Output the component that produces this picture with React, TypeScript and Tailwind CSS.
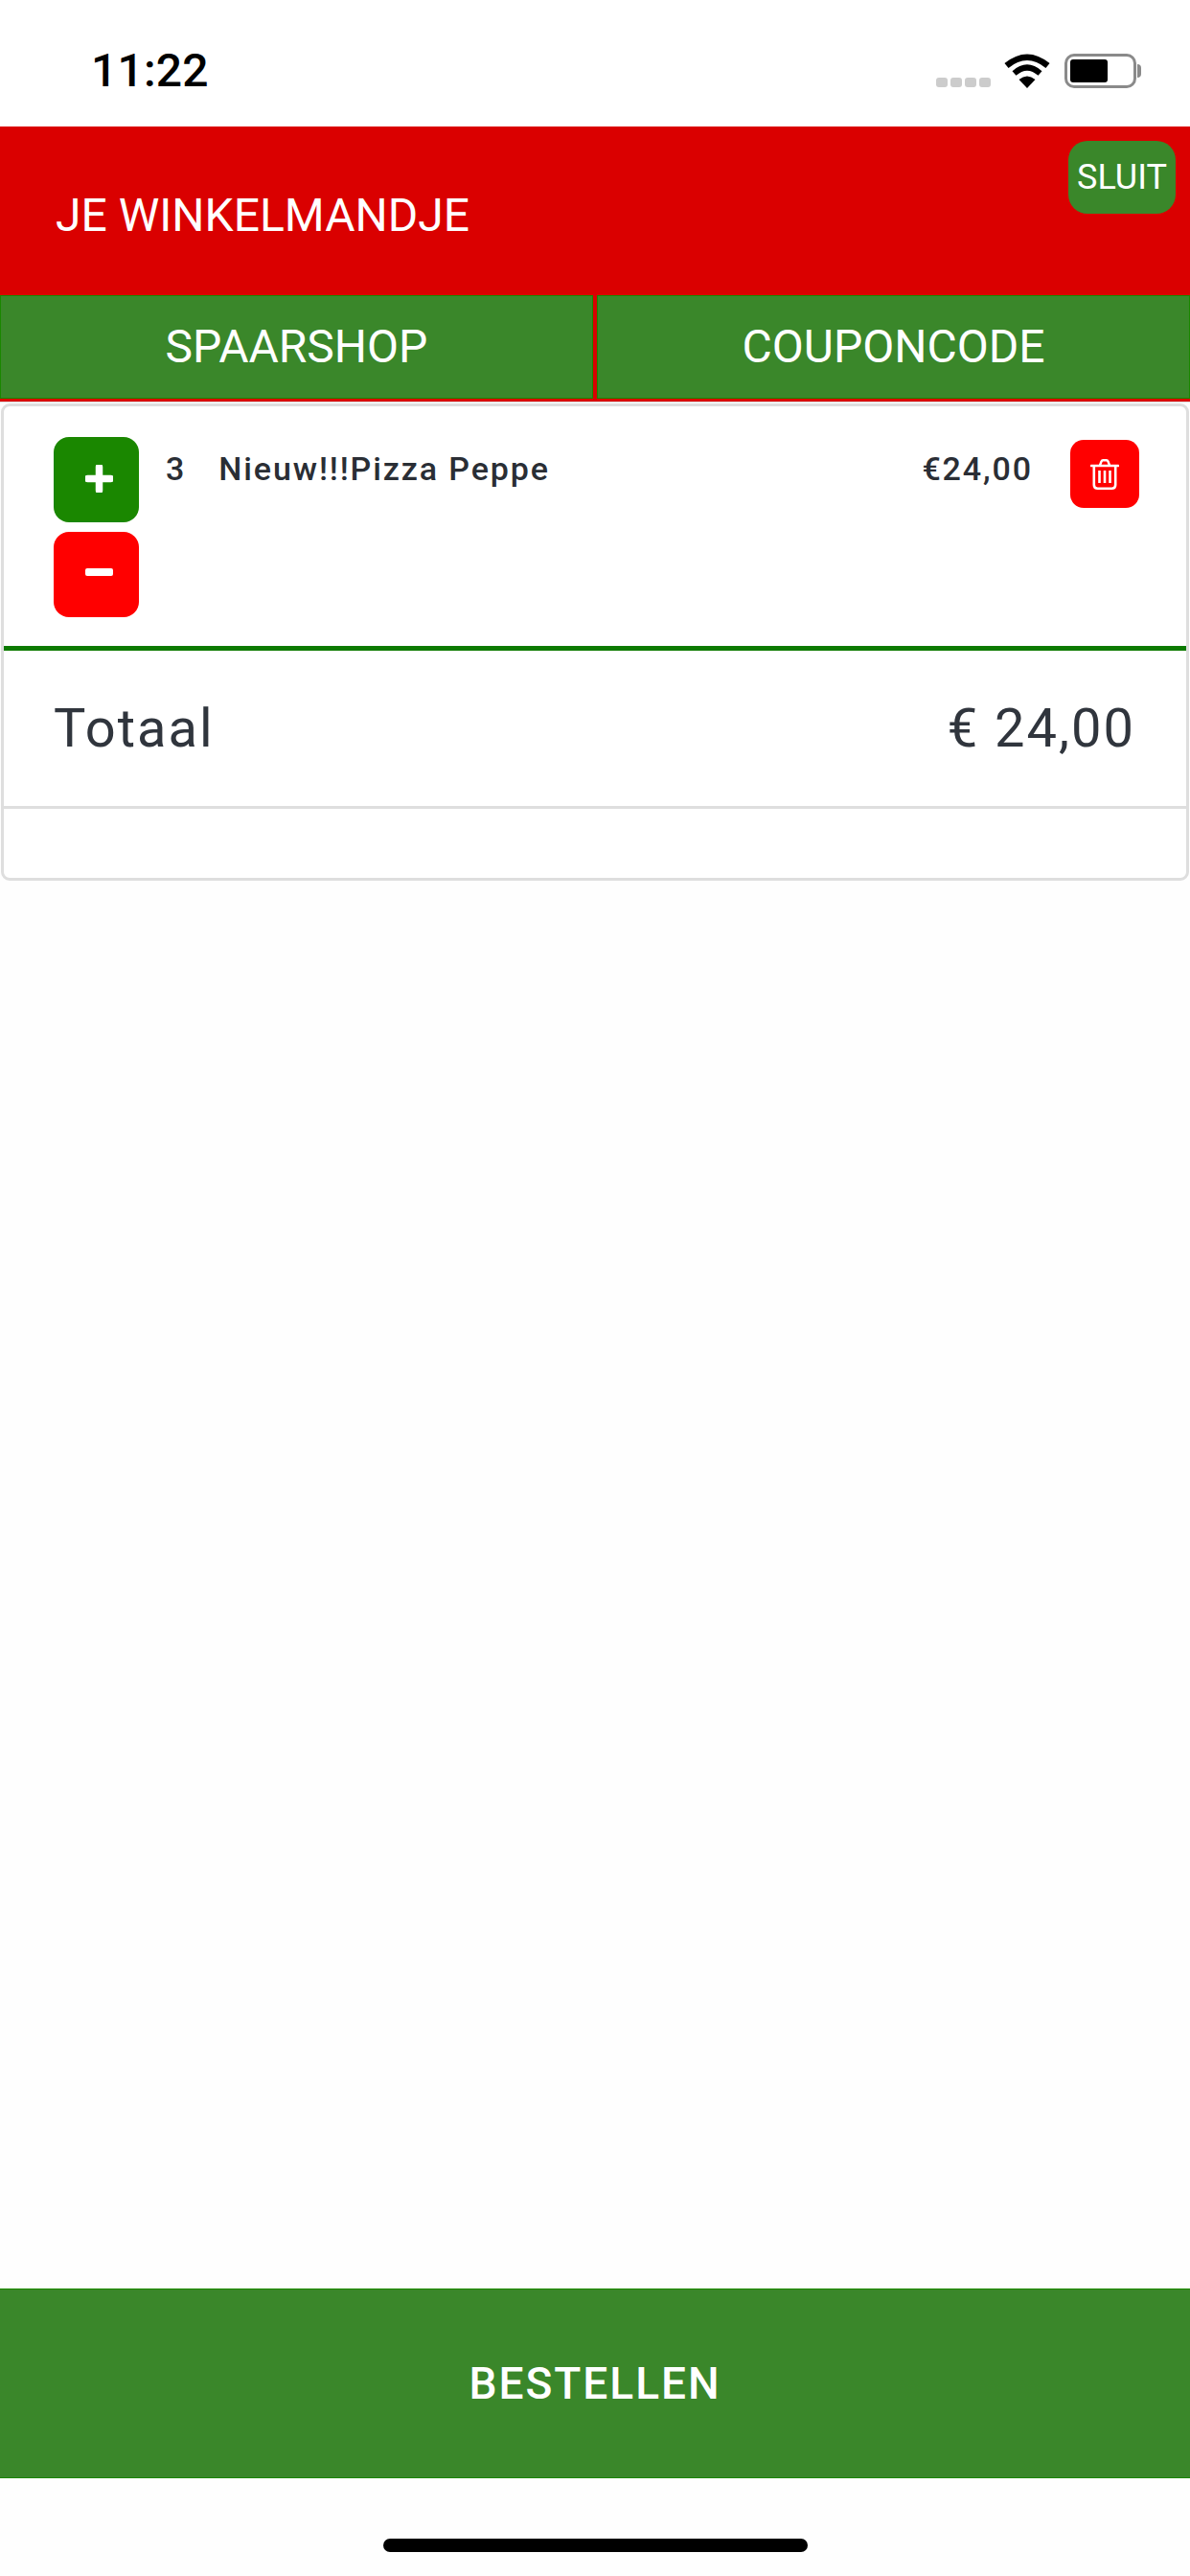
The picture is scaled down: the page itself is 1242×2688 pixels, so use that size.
const font = { fontFamily: "Roboto, 'Liberation Sans', sans-serif" };

function Wifi() {
  return (
    <svg width="48" height="36" viewBox="0 0 48 36" className="block">
      <path d="M2.5 12.5 Q24 -5 45.5 12.5" fill="none" stroke="#000" strokeWidth="6.5" />
      <path d="M10.5 20.5 Q24 8.5 37.5 20.5" fill="none" stroke="#000" strokeWidth="6" />
      <path d="M15.5 27 L24 36 L32.5 27 Q24 20 15.5 27 Z" fill="#000" />
    </svg>
  );
}

function Battery() {
  return (
    <div className="flex items-center">
      <div className="w-[75px] h-[36px] rounded-[10px] border-[3px] border-[#8a8a8a] p-[3px]">
        <div className="w-[39px] h-full rounded-[3px] bg-black" />
      </div>
      <div className="w-[4px] h-[14px] ml-[1px] rounded-r-[4px] bg-[#8a8a8a]" />
    </div>
  );
}

function Plus() {
  return (
    <svg width="29" height="29" viewBox="0 0 29 29" className="block">
      <path
        d="M14.5 2.5 V26.5 M2.5 14.5 H26.5"
        fill="none"
        stroke="#fff"
        strokeWidth="7.5"
        strokeLinecap="round"
      />
    </svg>
  );
}

function Trash() {
  return (
    <svg width="30" height="32" viewBox="0 0 30 32" className="block" fill="none" stroke="#fff">
      <path d="M1 7 H29" strokeWidth="2.6" strokeLinecap="round" />
      <path d="M10 6.5 L11.5 2.5 Q12 1.3 13.2 1.3 H16.8 Q18 1.3 18.5 2.5 L20 6.5" strokeWidth="2.4" />
      <path d="M3.8 7 V27 Q3.8 30.7 7.5 30.7 H22.5 Q26.2 30.7 26.2 27 V7" strokeWidth="2.6" />
      <path d="M9.5 12 V25 M15 12 V25 M20.5 12 V25" strokeWidth="2.6" />
    </svg>
  );
}

export default function App() {
  return (
    <div className="flex flex-col w-[1242px] h-[2688px] bg-[#fefefe] overflow-hidden" style={font}>
      <div className="flex items-start justify-between h-[132px] bg-white shrink-0">
        <div className="ml-[95px] mt-[45px] text-[48px] leading-[58px] font-medium text-black tracking-[0.2px]">11:22</div>
        <div className="flex items-start mt-[56px] mr-[51px]">
          <div className="flex gap-[3px] mt-[25px] mr-[14px]">
            <div className="w-[12px] h-[10px] rounded-[3px] bg-[#cccccc]" />
            <div className="w-[12px] h-[10px] rounded-[3px] bg-[#cccccc]" />
            <div className="w-[12px] h-[10px] rounded-[3px] bg-[#cccccc]" />
            <div className="w-[12px] h-[10px] rounded-[3px] bg-[#cccccc]" />
          </div>
          <Wifi />
          <div className="ml-[15px]">
            <Battery />
          </div>
        </div>
      </div>

      <div className="flex items-start justify-between h-[176px] bg-[#da0000] shrink-0">
        <div className="ml-[58px] mt-[65px] text-[48px] leading-[56px] text-white">JE WINKELMANDJE</div>
        <div className="flex items-center justify-center w-[112px] h-[76px] mt-[15px] mr-[15px] rounded-[20px] bg-[#3a872a] text-[36px] text-white">
          SLUIT
        </div>
      </div>

      <div className="grid grid-cols-2 gap-[4px] h-[112px] pb-[3px] bg-[#da0000] shrink-0 border-b border-[#dddddd]">
        <div className="flex items-center justify-center bg-[#3a872a] border border-[#1a8700] text-[48px] text-white">
          SPAARSHOP
        </div>
        <div className="flex items-center justify-center bg-[#3a872a] border border-[#1a8700] text-[48px] text-white">
          COUPONCODE
        </div>
      </div>

      <div className="mx-[1px] mt-[1px] h-[498px] rounded-[9px] border-[3px] border-[#dedede] bg-white shrink-0 flex flex-col overflow-hidden">
        <div className="flex items-start h-[255px] pl-[52px] pr-[49px] pt-[32px] border-b-[5px] border-[#0d7a00] shrink-0">
          <div className="flex flex-col gap-[10px] w-[89px] shrink-0">
            <div className="flex items-center justify-center pl-[5px] pb-[3px] h-[89px] rounded-[16px] bg-[#1a8700]">
              <Plus />
            </div>
            <div className="flex items-center justify-center pl-[5px] pb-[6px] h-[89px] rounded-[16px] bg-[#ff0000]">
              <div className="w-[29px] h-[8px] rounded-[2px] bg-white" />
            </div>
          </div>
          <div className="flex-1 flex items-start mt-[13px] ml-[28px] text-[34px] leading-[40px] font-medium text-[#2a2e35] tracking-[1.9px]">
            <span>3</span>
            <span className="ml-[34px]">Nieuw!!!Pizza Peppe</span>
            <span className="ml-auto">€24,00</span>
          </div>
          <div className="flex items-center justify-center w-[72px] h-[71px] mt-[3px] ml-[39px] rounded-[14px] bg-[#ff0000] shrink-0">
            <Trash />
          </div>
        </div>
        <div className="flex items-center justify-between h-[162px] pl-[52px] pr-[53px] text-[56px] text-[#30353d] tracking-[2px] shrink-0">
          <span>Totaal</span>
          <span>€ 24,00</span>
        </div>
        <div className="flex-1 border-t-[3px] border-[#dedede]" />
      </div>

      <div className="flex-1" />

      <div className="flex items-center justify-center h-[198px] bg-[#3a872a] border-y-[1px] border-[#1a8700] text-[46px] font-medium text-white tracking-[2px] shrink-0">
        BESTELLEN
      </div>

      <div className="flex justify-center h-[102px] pt-[63px] shrink-0">
        <div className="w-[443px] h-[14px] rounded-full bg-black" />
      </div>
    </div>
  );
}
